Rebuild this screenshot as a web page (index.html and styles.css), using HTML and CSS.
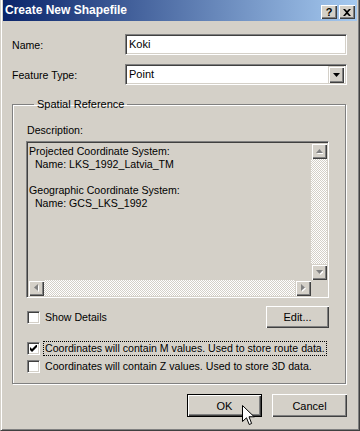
FILE: index.html
```html
<!DOCTYPE html>
<html lang="en">
<head>
    <meta charset="UTF-8">
    <meta name="viewport" content="width=device-width, initial-scale=1.0">
    <title>Create New Shapefile</title>
    <link rel="stylesheet" href="styles.css">
</head>
<body>
    <div class="window">
        <div class="titlebar">
            <span class="title">Create New Shapefile</span>
            <div class="title-buttons">
                <div class="tbtn help">?</div>
                <div class="tbtn">
                    <svg width="8" height="7" viewBox="0 0 8 7"><path d="M0 0h2l2 2 2-2h2L5 3.5 8 7H6L4 5 2 7H0l3-3.5z" fill="#000"/></svg>
                </div>
            </div>
        </div>

        <div class="content">
            <div class="form-grid">
                <span class="label">Name:</span>
                <div class="field">Koki</div>
                <span class="label">Feature Type:</span>
                <div class="field combo">
                    <span>Point</span>
                    <div class="drop">
                        <svg width="7" height="4" viewBox="0 0 7 4"><path d="M0 0h7L3.5 4z" fill="#000"/></svg>
                    </div>
                </div>
            </div>

            <fieldset class="group">
                <legend>Spatial Reference</legend>
                <div class="desc-label">Description:</div>
                <div class="desc-box">
                    <div class="desc-text">Projected Coordinate System:
  Name: LKS_1992_Latvia_TM

Geographic Coordinate System:
  Name: GCS_LKS_1992</div>
                    <div class="vscroll">
                        <div class="sbtn">
                            <svg width="7" height="5" viewBox="0 0 7 5"><path d="M1 5h7L4.5 1z" fill="#fff"/><path d="M0 4h7L3.5 0z" fill="#808080"/></svg>
                        </div>
                        <div class="track"></div>
                        <div class="sbtn">
                            <svg width="7" height="5" viewBox="0 0 7 5"><path d="M1 1h7L4.5 5z" fill="#fff"/><path d="M0 0h7L3.5 4z" fill="#808080"/></svg>
                        </div>
                    </div>
                    <div class="hscroll">
                        <div class="sbtn">
                            <svg width="5" height="8" viewBox="0 0 5 8"><path d="M5 1v7L1 4.5z" fill="#fff"/><path d="M4 0v7L0 3.5z" fill="#808080"/></svg>
                        </div>
                        <div class="track"></div>
                        <div class="sbtn">
                            <svg width="5" height="8" viewBox="0 0 5 8"><path d="M1 1v7L5 4.5z" fill="#fff"/><path d="M0 0v7L4 3.5z" fill="#808080"/></svg>
                        </div>
                    </div>
                    <div class="corner"></div>
                </div>

                <div class="details-row">
                    <div class="check">
                        <span class="box"></span>
                        <span>Show Details</span>
                    </div>
                    <div class="btn edit">Edit...</div>
                </div>

                <div class="check m-row">
                    <span class="box">
                        <svg width="7" height="7" viewBox="0 0 7 7"><path d="M0 2v3l2 2 5-5V-1L2 4z" fill="#000"/></svg>
                    </span>
                    <span class="focused">Coordinates will contain M values. Used to store route data.</span>
                </div>
                <div class="check z-row">
                    <span class="box"></span>
                    <span>Coordinates will contain Z values. Used to store 3D data.</span>
                </div>
            </fieldset>

            <div class="dialog-buttons">
                <div class="btn default">OK</div>
                <div class="btn">Cancel</div>
            </div>
        </div>

        <svg class="cursor" width="13" height="21" viewBox="0 0 13 21">
            <path d="M0.5 0.5V16.5L4.5 12.8L7.2 19.5L9.6 18.5L7 11.8H12.2Z" fill="#fff" stroke="#000" stroke-linejoin="miter"/>
        </svg>
    </div>
</body>
</html>
```

FILE: styles.css
```css
body {
    margin: 0;
    font-family: "Liberation Sans", Arial, sans-serif;
    font-size: 10.6px;
    color: #000;
    background-color: #d4d0c8;
}

.window {
    position: relative;
    width: 360px;
    height: 431px;
    box-sizing: border-box;
    background-color: #d4d0c8;
    border: 1px solid;
    border-color: #d4d0c8 #404040 #404040 #d4d0c8;
    border-top: none;
    box-shadow: inset 1px 0 #fff, inset -1px -1px #808080;
    padding: 0 2px 2px 2px;
}

.titlebar {
    height: 21px;
    display: flex;
    align-items: flex-start;
    justify-content: space-between;
    background: linear-gradient(to right, #0a246a, #a6caf0);
    padding: 0 2px;
}

.title {
    color: #fff;
    font-weight: bold;
    font-size: 12px;
    line-height: 21px;
}

.title-buttons {
    display: flex;
    gap: 2px;
    margin-top: 5px;
}

.tbtn {
    width: 16px;
    height: 14px;
    box-sizing: border-box;
    display: flex;
    align-items: center;
    justify-content: center;
    background-color: #d4d0c8;
    box-shadow: inset 1px 1px #fff, inset -1px -1px #404040, inset -2px -2px #808080;
}

.tbtn.help {
    font-weight: bold;
    font-size: 11px;
    line-height: 14px;
}

.content {
    padding: 13px 0 0 9px;
}

.form-grid {
    display: grid;
    grid-template-columns: 113px 222px;
    row-gap: 9px;
    align-items: center;
}

.field {
    height: 21px;
    box-sizing: border-box;
    background-color: #fff;
    border: 1px solid;
    border-color: #808080 #fff #fff #808080;
    box-shadow: inset 1px 1px #404040, inset -1px -1px #d4d0c8;
    padding: 0 2px 0 3px;
    line-height: 19px;
    font-size: 11px;
}

.combo {
    display: flex;
    justify-content: space-between;
    align-items: center;
    padding-right: 2px;
}

.drop {
    width: 16px;
    height: 17px;
    box-sizing: border-box;
    display: flex;
    align-items: center;
    justify-content: center;
    background-color: #d4d0c8;
    box-shadow: inset 1px 1px #d4d0c8, inset 2px 2px #fff, inset -1px -1px #404040, inset -2px -2px #808080;
}

.group {
    width: 334px;
    box-sizing: border-box;
    margin: 13px 0 0 0;
    padding: 0 16px 10px 13px;
    border: 1px solid #808080;
    box-shadow: inset 1px 1px #fff, 1px 1px #fff;
    min-inline-size: 0;
}

.group legend {
    margin-left: 8px;
    padding: 0 3px;
    line-height: 13px;
    font-size: 11px;
}

.desc-label {
    margin-top: 13px;
    line-height: 13px;
    margin-left: 1px;
    margin-bottom: 4px;
}

.desc-box {
    height: 157px;
    box-sizing: border-box;
    border: 1px solid;
    border-color: #808080 #fff #fff #808080;
    box-shadow: inset 1px 1px #404040, inset -1px -1px #d4d0c8;
    padding: 1px;
    display: grid;
    grid-template-columns: 1fr 16px;
    grid-template-rows: 1fr 16px;
}

.desc-text {
    white-space: pre;
    line-height: 13px;
    padding: 2px 0 0 1px;
    overflow: hidden;
}

.vscroll {
    display: flex;
    flex-direction: column;
}

.hscroll {
    display: flex;
}

.track {
    flex: 1;
    background: repeating-conic-gradient(#fff 0 25%, #d4d0c8 0 50%) 0 0 / 2px 2px;
}

.sbtn {
    width: 16px;
    height: 16px;
    box-sizing: border-box;
    display: flex;
    align-items: center;
    justify-content: center;
    background-color: #d4d0c8;
    box-shadow: inset 1px 1px #d4d0c8, inset 2px 2px #fff, inset -1px -1px #404040, inset -2px -2px #808080;
}

.corner {
    background-color: #d4d0c8;
}

.details-row {
    display: flex;
    align-items: center;
    justify-content: space-between;
    margin-top: 8px;
    height: 22px;
}

.check {
    display: flex;
    align-items: center;
    gap: 5px;
    margin-left: 1px;
    line-height: 13px;
}

.box {
    width: 13px;
    height: 13px;
    box-sizing: border-box;
    display: flex;
    align-items: center;
    justify-content: center;
    background-color: #fff;
    border: 1px solid;
    border-color: #808080 #fff #fff #808080;
    box-shadow: inset 1px 1px #404040, inset -1px -1px #d4d0c8;
}

.m-row {
    margin-top: 14px;
}

.z-row {
    margin-top: 5px;
}

.focused {
    outline: 1px dotted #000;
    padding: 0 1px;
    margin-left: -1px;
}

.btn {
    width: 75px;
    height: 23px;
    box-sizing: border-box;
    display: flex;
    align-items: center;
    justify-content: center;
    background-color: #d4d0c8;
    box-shadow: inset 1px 1px #fff, inset -1px -1px #404040, inset -2px -2px #808080;
    font-size: 11px;
}

.btn.edit {
    width: 63px;
    height: 22px;
}

.btn.default {
    border: 1px solid #000;
}

.dialog-buttons {
    display: flex;
    justify-content: flex-end;
    gap: 10px;
    margin-top: 10px;
    padding-right: 10px;
}

.cursor {
    position: absolute;
    left: 241px;
    top: 405px;
}
```
